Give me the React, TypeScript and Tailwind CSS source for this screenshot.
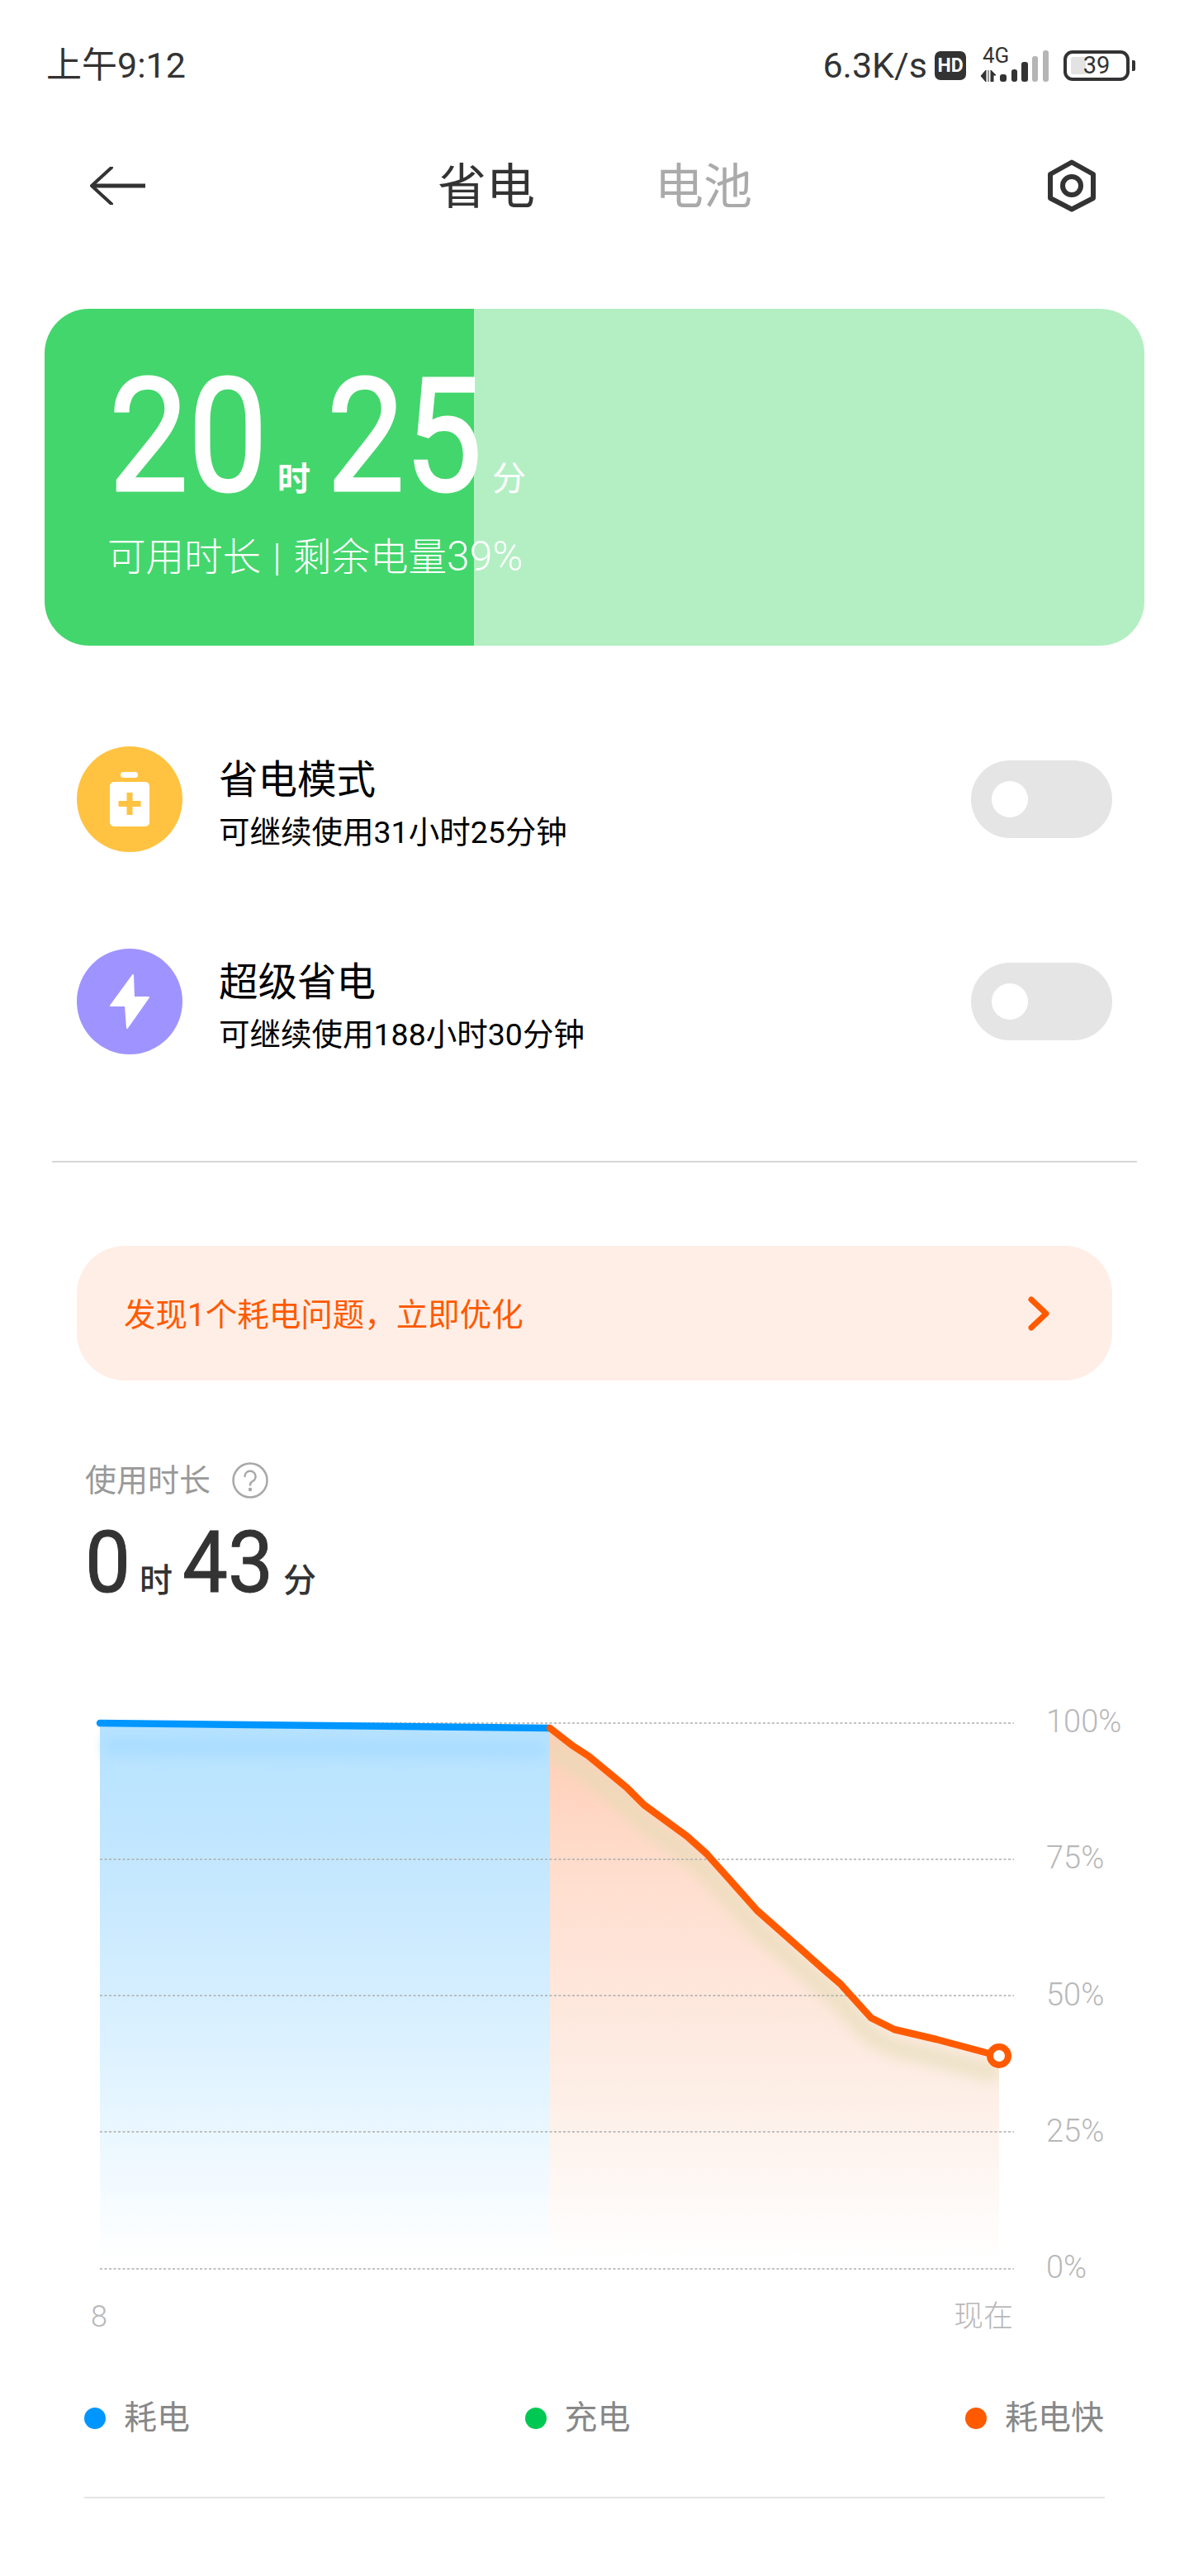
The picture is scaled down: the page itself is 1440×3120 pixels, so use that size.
const orangeLine = "M666 2092 L693 2113 L713 2126 L759 2164 L780 2185 L832 2223 L855.5 2244 L885 2277 L917 2313 L968 2358 L996 2383 L1018 2402 L1055 2443 L1083 2457 L1134 2469 L1197.5 2486 L1210 2489";

function StatusBar() {
    return (
        <div className="h-[158px] flex items-center justify-between pl-[56px] pr-[65px] text-[#333]">
            <span className="text-[43px] leading-none">上午9:12</span>
            <div className="flex items-center">
                <span className="text-[43px] leading-none">6.3K/s</span>
                <span className="ml-[9px] w-[38px] h-[35px] rounded-[7px] bg-[#333] text-white text-[23px] font-bold flex items-center justify-center leading-none">HD</span>
                <div className="relative ml-[17px] w-[84px] h-[40px]">
                    <span className="absolute left-[3px] top-[-5px] text-[26px] leading-none">4G</span>
                    <svg width="84" height="40" viewBox="0 0 84 40">
                        <path d="M7 26 L7 40 L1 33 Z M10 26 L10 40 M13 26 L19 32 L16 32 L16 40 L13 40 Z" fill="#333" stroke="#333" strokeWidth="1" />
                        <rect x="24" y="31" width="8" height="9" rx="3" fill="#333" />
                        <rect x="38" y="25" width="7" height="15" rx="3" fill="#333" />
                        <rect x="50" y="16" width="8" height="24" rx="3" fill="#333" />
                        <rect x="63" y="9" width="7" height="31" rx="3" fill="#b5b5b5" />
                        <rect x="76" y="2" width="7" height="38" rx="3" fill="#b5b5b5" />
                    </svg>
                </div>
                <div className="ml-[17px] relative w-[80px] h-[37px] border-[4px] border-[#333] rounded-[11px] flex items-center justify-center">
                    <div className="absolute left-[5px] top-[4px] bottom-[4px] w-[18px] bg-[#e3e3e3] rounded-l-[3px]" />
                    <span className="relative text-[29px] leading-none">39</span>
                </div>
                <div className="ml-[3px] w-[4px] h-[13px] rounded-r-[2px] bg-[#333]" />
            </div>
        </div>
    );
}

function NavBar() {
    return (
        <div className="h-[134px] flex items-center pl-[108px] pr-[113px]">
            <svg width="68" height="46" viewBox="0 0 68 46" fill="none" stroke="#333">
                <path d="M3 23 H68" strokeWidth="5" />
                <path d="M27 1 L3 23 L27 45" strokeWidth="4" strokeLinecap="round" strokeLinejoin="round" />
            </svg>
            <div className="ml-[354px] mt-[3px] flex gap-[145px] text-[59px] leading-none">
                <span className="text-[#333]">省电</span>
                <span className="text-[#aaa]">电池</span>
            </div>
            <svg className="ml-auto" width="58" height="64" viewBox="0 0 58 64" fill="none" stroke="#333" strokeWidth="6" strokeLinejoin="round">
                <path d="M29 3.5 L55 18 V47 L29 60.5 L3 47 V18 Z" />
                <circle cx="29" cy="32" r="11" />
            </svg>
        </div>
    );
}

function BatteryCard() {
    return (
        <div className="mt-[82px] mx-[54px] h-[408px] rounded-[54px] bg-[linear-gradient(90deg,#43d66c_520px,#b3efc3_520px)] text-white pt-[70px] pl-[78px]">
            <div className="flex items-baseline h-[170px]">
                <span className="inline-block w-[196px] origin-left scale-x-[0.89] text-[192px] leading-[170px] [-webkit-text-stroke:3px_white]">20</span>
                <span className="text-[40px] leading-none ml-[8px] font-bold">时</span>
                <span className="inline-block w-[191px] origin-left scale-x-[0.87] text-[192px] leading-[170px] [-webkit-text-stroke:3px_white] ml-[20px]">25</span>
                <span className="text-[41px] leading-none ml-[9px]">分</span>
            </div>
            <div className="mt-[34px] ml-[-2px] text-[46.5px] leading-[52px] font-light [word-spacing:3px]">可用时长 | 剩余电量<span className="text-[50px]">39%</span></div>
        </div>
    );
}

function ModeRow({ title, sub, color, icon, className }: { title: string; sub: string; color: string; icon: React.ReactNode; className?: string }) {
    return (
        <div className={"flex items-center pl-[93px] pr-[93px] h-[128px] " + (className || "")}>
            <div className={"w-[128px] h-[128px] rounded-full flex items-center justify-center " + color}>{icon}</div>
            <div className="ml-[44px] pt-[11px] flex flex-col text-black">
                <span className="text-[47.5px] leading-[56px]">{title}</span>
                <span className="mt-[13px] text-[37.5px] leading-[44px]">{sub}</span>
            </div>
            <div className="ml-auto w-[171px] h-[94px] rounded-full bg-[#e5e5e5] flex items-center pl-[25px]">
                <div className="w-[44px] h-[44px] rounded-full bg-white" />
            </div>
        </div>
    );
}

function BatteryPlusIcon() {
    return (
        <svg width="48" height="66" viewBox="0 0 48 66" fill="white">
            <rect x="13" y="0" width="21" height="7" rx="3.5" />
            <path fillRule="evenodd" d="M5 12 H43 A5 5 0 0 1 48 17 V61 A5 5 0 0 1 43 66 H5 A5 5 0 0 1 0 61 V17 A5 5 0 0 1 5 12 Z M20.5 25 V35 H10.5 V42 H20.5 V52 H27.5 V42 H37.5 V35 H27.5 V25 Z" />
        </svg>
    );
}

function BoltIcon() {
    return (
        <svg width="50" height="68" viewBox="0 0 50 68" fill="white" stroke="white" strokeWidth="2" strokeLinejoin="round">
            <path d="M29 2 L2 39 L20 39 L22 66 L48 29 L30 29 Z" />
        </svg>
    );
}

function UsageHeader() {
    return (
        <div className="pl-[103px] mt-[99px] text-[#333]">
            <div className="flex items-center h-[44px]">
                <span className="text-[38px] leading-none text-[#999]">使用时长</span>
                <svg className="ml-[26px]" width="44" height="44" viewBox="0 0 44 44" fill="none" stroke="#a8a8a8" strokeWidth="2.5">
                    <circle cx="22" cy="22" r="20.5" />
                    <path d="M15.5 17 A6.5 6.5 0 1 1 25 23 C23 24 22 25 22 27.5" strokeLinecap="round" />
                    <circle cx="22" cy="33" r="1" fill="#a8a8a8" />
                </svg>
            </div>
            <div className="flex items-baseline mt-[32px] h-[92px]">
                <span className="inline-block w-[52px] origin-left scale-x-[0.95] text-[103px] leading-[92px] [-webkit-text-stroke:1px_#333]">0</span>
                <span className="ml-[14px] text-[40px] leading-none font-medium">时</span>
                <span className="inline-block w-[108px] ml-[12px] origin-left scale-x-[0.95] text-[103px] leading-[92px] [-webkit-text-stroke:1px_#333]">43</span>
                <span className="ml-[14px] text-[40px] leading-none font-medium">分</span>
            </div>
        </div>
    );
}

function BatteryChart() {
    const gridY = [2086, 2251, 2416, 2581, 2747];
    return (
        <svg width="1125" height="701" viewBox="113 2064 1125 701" fill="none">
            <defs>
                <linearGradient id="blueFill" x1="0" y1="2086" x2="0" y2="2735" gradientUnits="userSpaceOnUse">
                    <stop offset="0" stopColor="#b5e2ff" />
                    <stop offset="0.3" stopColor="#c6e8ff" />
                    <stop offset="0.65" stopColor="#e0f3ff" />
                    <stop offset="1" stopColor="#ffffff" />
                </linearGradient>
                <linearGradient id="orangeFill" x1="0" y1="2092" x2="0" y2="2735" gradientUnits="userSpaceOnUse">
                    <stop offset="0" stopColor="#ffcdb5" />
                    <stop offset="0.3" stopColor="#ffdfd0" />
                    <stop offset="0.68" stopColor="#fdeee6" />
                    <stop offset="1" stopColor="#ffffff" />
                </linearGradient>
                <filter id="lineBlur" filterUnits="userSpaceOnUse" x="100" y="2060" width="1150" height="700">
                    <feGaussianBlur stdDeviation="8" />
                </filter>
                <clipPath id="orangeClip">
                    <path d={orangeLine + " V2735 H666 Z"} />
                </clipPath>
            </defs>
            <path d="M121 2086 L666 2092 V2735 H121 Z" fill="url(#blueFill)" />
            <path d="M126 2114 L660 2118" stroke="#a8dcff" strokeWidth="18" filter="url(#lineBlur)" />
            <path d={orangeLine + " V2735 H666 Z"} fill="url(#orangeFill)" />
            <g clipPath="url(#orangeClip)">
                <path d={orangeLine} transform="translate(0 22)" stroke="#e2dcb4" strokeOpacity="0.6" strokeWidth="22" filter="url(#lineBlur)" />
            </g>
            {gridY.map(y => (
                <line key={y} x1="121" x2="1228" y1={y} y2={y} stroke="#adadad" strokeWidth="1.5" strokeDasharray="3 2.5" />
            ))}
            <path d="M121 2086 L665 2092" stroke="#0096ff" strokeWidth="8.5" strokeLinecap="round" />
            <path d={orangeLine} stroke="#ff5a00" strokeWidth="8.5" strokeLinecap="round" strokeLinejoin="round" />
            <circle cx="1210" cy="2489" r="11" fill="white" stroke="#ff5a00" strokeWidth="8" />
        </svg>
    );
}

function LegendItem({ dot, label }: { dot: string; label: string }) {
    return (
        <div className="flex items-center">
            <div className={"w-[26px] h-[26px] rounded-full " + dot} />
            <span className="ml-[22px] text-[40px] leading-[48px] text-[#888]">{label}</span>
        </div>
    );
}

export default function App() {
    return (
        <div className="w-[1440px] h-[3120px] bg-white overflow-hidden [font-family:Roboto,'Noto_Sans_CJK_SC',sans-serif]">
            <StatusBar />
            <NavBar />
            <BatteryCard />
            <ModeRow className="mt-[122px]" title="省电模式" sub="可继续使用31小时25分钟" color="bg-[#ffc341]" icon={<BatteryPlusIcon />} />
            <ModeRow className="mt-[117px]" title="超级省电" sub="可继续使用188小时30分钟" color="bg-[#9f94ff]" icon={<BoltIcon />} />
            <div className="mt-[129px] mx-[63px] h-[2px] bg-[#d6d6d6]" />
            <div className="mt-[101px] mx-[93px] h-[163px] rounded-[58px] bg-[#ffeee6] flex items-center justify-between pl-[57px] pr-[76px] text-[#ff5a00]">
                <span className="pt-[5px] text-[38.5px] leading-none">发现1个耗电问题，立即优化</span>
                <svg width="26" height="42" viewBox="0 0 26 42" fill="none" stroke="#ff5a00" strokeWidth="7" strokeLinecap="round" strokeLinejoin="round">
                    <path d="M4 4 L22 21 L4 38" />
                </svg>
            </div>
            <UsageHeader />
            <div className="mt-[126px] flex pl-[113px]">
                <BatteryChart />
                <div className="ml-[29px] h-[701px] flex flex-col justify-between text-[38px] leading-[40px] font-light text-[#b8b8b8]">
                    <span>100%</span>
                    <span>75%</span>
                    <span>50%</span>
                    <span>25%</span>
                    <span>0%</span>
                </div>
            </div>
            <div className="mt-[20px] ml-[110px] w-[1117px] flex justify-between text-[36px] leading-[40px] font-light text-[#b8b8b8]">
                <span>8</span>
                <span>现在</span>
            </div>
            <div className="mt-[79px] pl-[102px] pr-[103px] flex justify-between">
                <LegendItem dot="bg-[#0096ff]" label="耗电" />
                <LegendItem dot="bg-[#00c853]" label="充电" />
                <LegendItem dot="bg-[#ff5a00]" label="耗电快" />
            </div>
            <div className="mt-[71px] ml-[102px] w-[1236px] h-[2px] bg-[#e5e5e5]" />
        </div>
    );
}
